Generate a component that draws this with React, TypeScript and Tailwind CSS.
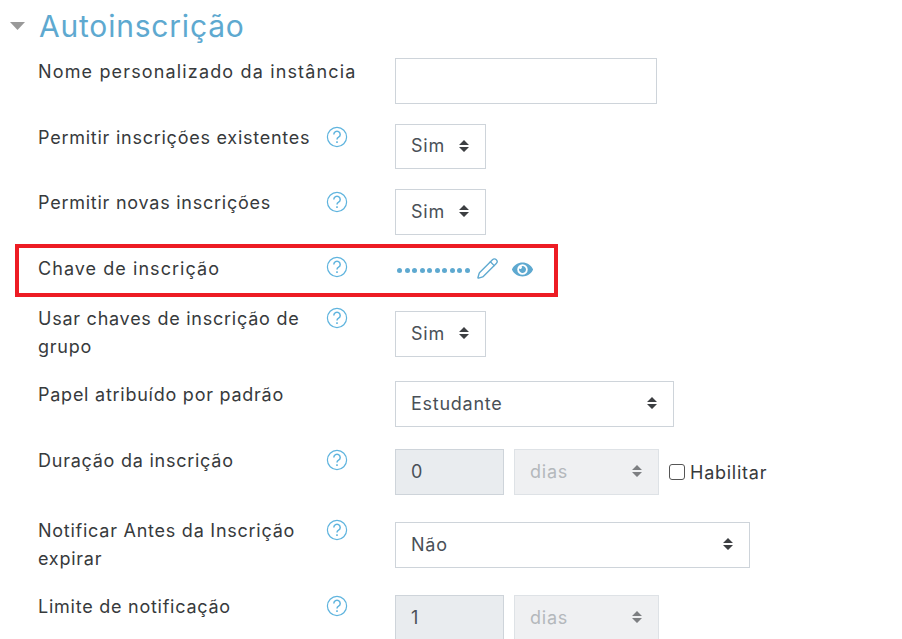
import { ReactNode } from "react";
import { Pencil } from "lucide-react";
import { FaEye } from "react-icons/fa";

function Arrows({ muted }: { muted?: boolean }) {
  return (
    <svg width="10" height="14" viewBox="0 0 10 14" className={muted ? "text-[#7d7f82]" : "text-[#3d3f42]"}>
      <path d="M5 1 L10 6 L0 6 Z M0 8 L10 8 L5 13 Z" fill="currentColor" />
    </svg>
  );
}

function Select({
  label,
  width,
  muted,
  height = "h-[46px]",
}: {
  label: string;
  width: string;
  muted?: boolean;
  height?: string;
}) {
  return (
    <div
      className={
        "flex items-center justify-between border pb-[2px] pl-[15px] pr-[16px] " +
        width +
        " " +
        height +
        (muted ? " border-[#dee2e6] bg-[#eff0f2] text-[#b4b8bc]" : " border-[#ced4da] bg-white text-[#495057]")
      }
    >
      <span>{label}</span>
      <Arrows muted={muted} />
    </div>
  );
}

function NumberBox({ value }: { value: string }) {
  return (
    <div className="flex h-[46px] w-[109px] items-center border border-[#ced4da] bg-[#e9ecef] pb-[2px] pl-[15px] text-[#495057]">
      {value}
    </div>
  );
}

function Help() {
  return (
    <svg width="24" height="24" viewBox="0 0 24 24" fill="none" stroke="currentColor" className="text-[#5fb4de]">
      <circle cx="12" cy="12" r="9.6" strokeWidth="1.2" />
      <path d="M8.8 9.4a3.2 3.2 0 1 1 4.8 2.8c-1 .6-1.6 1.2-1.6 2.4" strokeWidth="1.5" />
      <path d="M12 16.2v1.8" strokeWidth="1.6" />
    </svg>
  );
}

function Row({
  label,
  help = true,
  height,
  control = "",
  children,
}: {
  label: ReactNode;
  help?: boolean;
  height: string;
  control?: string;
  children: ReactNode;
}) {
  return (
    <div className={"flex pl-[38px] " + height}>
      <div className="w-[278px] whitespace-nowrap leading-[28px] text-[#373a3c]">{label}</div>
      <div className="w-[79px] pl-[9px] pt-[1px]">{help && <Help />}</div>
      <div className={"flex items-start " + control}>{children}</div>
    </div>
  );
}

export default function App() {
  return (
    <div className="h-[639px] w-[902px] overflow-hidden bg-white font-['Inter',sans-serif] text-[18px] tracking-[0.75px]">
      <div className="flex h-[58px] items-center pb-[7px]">
        <svg width="15" height="8" viewBox="0 0 15 8" className="ml-[10px] mr-[14px] text-[#999]">
          <path d="M0 0 L15 0 L7.5 8 Z" fill="currentColor" />
        </svg>
        <h3 className="text-[30px] leading-none tracking-[0.8px] text-[#5ea9d0]">Autoinscrição</h3>
      </div>

      <Row
        label={<span className="tracking-[1.15px]">Nome personalizado da instância</span>}
        help={false}
        height="h-[66px]"
      >
        <div className="h-[46px] w-[262px] border border-[#ced4da] bg-white" />
      </Row>
      <Row label="Permitir inscrições existentes" height="h-[65px]">
        <Select label="Sim" width="w-[91px]" height="h-[45px]" />
      </Row>
      <Row label="Permitir novas inscrições" height="h-[55px]">
        <Select label="Sim" width="w-[91px]" />
      </Row>

      <div className="ml-[15px] flex h-[53px] w-[543px] items-center border-4 border-[#ed1c24] pl-[19px]">
        <div className="w-[278px] pb-[4px] tracking-[1.05px] text-[#373a3c]">Chave de inscrição</div>
        <div className="w-[79px] pb-[7px] pl-[9px]">
          <Help />
        </div>
        <div className="flex items-center">
          <span className="flex w-[81px] gap-[2.55px] pl-[2px]">
            {Array.from({ length: 10 }).map((_, i) => (
              <span key={i} className="h-[5px] w-[5px] rounded-full bg-[#5ea9d0]" />
            ))}
          </span>
          <Pencil size={23} strokeWidth={1.4} className="mb-[5px] text-[#5ea9d0]" />
          <FaEye size={21} className="mb-[3px] ml-[13px] text-[#5ea9d0]" />
        </div>
      </div>

      <div className="h-[8px]" />
      <Row
        label={
          <>
            Usar chaves de inscrição de
            <br />
            grupo
          </>
        }
        height="h-[76px]"
        control="mt-[6px]"
      >
        <Select label="Sim" width="w-[91px]" />
      </Row>
      <Row label="Papel atribuído por padrão" help={false} height="h-[66px]">
        <Select label="Estudante" width="w-[279px]" />
      </Row>
      <Row label="Duração da inscrição" height="h-[70px]" control="mt-[2px]">
        <div className="flex items-center gap-[10px]">
          <NumberBox value="0" />
          <Select label="dias" width="w-[145px]" muted />
          <label className="flex items-center gap-[5px] text-[#373a3c]">
            <span className="h-[16px] w-[16px] rounded-[3px] border border-[#555] bg-white" />
            Habilitar
          </label>
        </div>
      </Row>
      <Row
        label={
          <>
            Notificar Antes da Inscrição
            <br />
            expirar
          </>
        }
        height="h-[76px]"
        control="mt-[5px]"
      >
        <Select label="Não" width="w-[355px]" />
      </Row>
      <Row label="Limite de notificação" height="h-[46px]" control="mt-[2px]">
        <div className="flex items-center gap-[10px]">
          <NumberBox value="1" />
          <Select label="dias" width="w-[145px]" muted />
        </div>
      </Row>
    </div>
  );
}
